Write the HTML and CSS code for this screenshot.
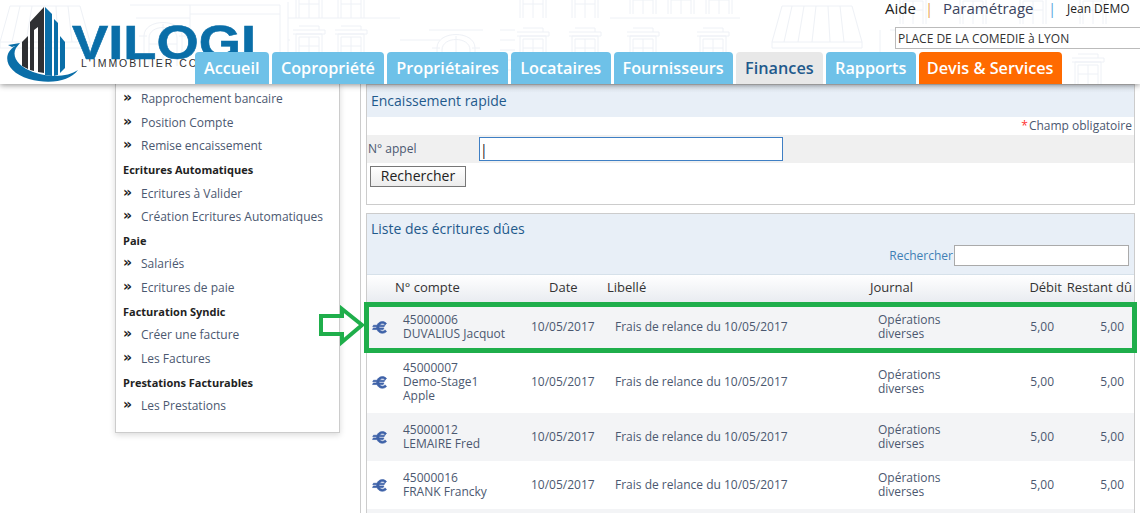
FILE: index.html
```html
<!DOCTYPE html>
<html lang="fr">
<head>
<meta charset="utf-8">
<title>Vilogi - Finances</title>
<link rel="stylesheet" href="styles.css">
</head>
<body>
<header class="header">
  <svg class="header-bg" width="1140" height="84" viewBox="0 0 1140 84" aria-hidden="true">
    <defs>
      <g id="win">
        <path d="M0 34V8H26V34M3 34V11H23V34M13 11V34M3 20H23M-3 8H29M-3 4H29V8M3 0H23V4"/>
      </g>
      <g id="arch">
        <path d="M0 52V22C0 4 38 4 38 22V52M5 52V24C5 10 33 10 33 24V52M19 10V52M5 30H33M-5 22H3M35 22H43M-8 4H46"/>
      </g>
      <g id="awn">
        <path d="M10 0H80L90 36H0ZM20 0L12 36M32 0L26 36M44 0L40 36M56 0L58 36M68 0L72 36M0 36V42H90V36"/>
      </g>
    </defs>
    <g class="bg-lines">
      <use href="#awn" x="0" y="6"/>
      <use href="#arch" x="144" y="14"/>
      <use href="#arch" x="437" y="26"/>
      <use href="#win" x="296" y="26"/>
      <use href="#win" x="338" y="26"/>
      <use href="#win" x="520" y="28"/>
      <use href="#win" x="572" y="28"/>
      <use href="#win" x="630" y="28"/>
      <use href="#win" x="700" y="28"/>
      <use href="#awn" x="772" y="6"/>
      <use href="#win" x="296" y="-16"/>
      <use href="#win" x="338" y="-16"/>
      <use href="#win" x="520" y="-16"/>
      <use href="#win" x="572" y="-16"/>
      <use href="#win" x="630" y="-20"/>
      <use href="#win" x="668" y="-20"/>
      <use href="#win" x="706" y="-20"/>
      <use href="#win" x="900" y="-10"/>
      <use href="#win" x="960" y="-10"/>
      <use href="#win" x="1020" y="-10"/>
      <use href="#win" x="1080" y="-10"/>
      <use href="#win" x="1075" y="54"/>
      <path d="M130 5H280M190 14H280M190 5V52M280 5V84M288 2V84M288 18H400M288 40H290M400 40H440M500 30H515M500 40H515M500 50H515M500 60H515M500 70H515M610 18H740M880 30V52M890 30H1140"/>
    </g>
  </svg>
  <svg class="logo" width="270" height="84" viewBox="0 0 270 84" role="img" aria-label="Vilogi">
    <path class="logo-dark" d="M30 22 44 7V73L38 72V27L34 30V71L30 70Z"/>
    <path class="logo-dark" d="M22 42 28 36V69L22 66Z"/>
    <path class="logo-blue" d="M45 7 52 14V76L45 75Z"/>
    <path class="logo-blue" d="M54 19 58 23V75L54 76Z"/>
    <path class="logo-blue" d="M60 36 65 42V68L60 73Z"/>
    <path class="logo-blue" d="M15 46C1 55 6 72 29 79C50 85 70 81 78 70C68 77 50 78 33 72C19 67 11 57 16 48L20 43 8 45 12 47Z"/>
    <text class="logo-name" x="72" y="59" textLength="184" lengthAdjust="spacingAndGlyphs">VILOGI</text>
    <text class="logo-tag" x="81" y="67" textLength="116" lengthAdjust="spacing">L'IMMOBILIER CO</text>
  </svg>
  <div class="account">
    <a class="account-link account-help">Aide</a>
    <span class="sep">|</span>
    <a class="account-link account-settings">Paramétrage</a>
    <span class="sep sep-blue">|</span>
    <span class="account-user">Jean DEMO</span>
  </div>
  <div class="residence"><input class="residence-input" type="text" value="PLACE DE LA COMEDIE à LYON"></div>
  <nav class="tabs">
    <a class="tab">Accueil</a>
    <a class="tab">Copropriété</a>
    <a class="tab">Propriétaires</a>
    <a class="tab">Locataires</a>
    <a class="tab">Fournisseurs</a>
    <a class="tab tab-active">Finances</a>
    <a class="tab">Rapports</a>
    <a class="tab tab-orange">Devis &amp; Services</a>
  </nav>
</header>

<div class="layout">
  <aside class="sidebar">
    <ul class="menu">
      <li class="menu-item">Rapprochement bancaire</li>
      <li class="menu-item">Position Compte</li>
      <li class="menu-item">Remise encaissement</li>
      <li class="menu-title">Ecritures Automatiques</li>
      <li class="menu-item">Ecritures à Valider</li>
      <li class="menu-item">Création Ecritures Automatiques</li>
      <li class="menu-title">Paie</li>
      <li class="menu-item">Salariés</li>
      <li class="menu-item">Ecritures de paie</li>
      <li class="menu-title">Facturation Syndic</li>
      <li class="menu-item">Créer une facture</li>
      <li class="menu-item">Les Factures</li>
      <li class="menu-title">Prestations Facturables</li>
      <li class="menu-item">Les Prestations</li>
    </ul>
  </aside>

  <main class="main">
    <section class="panel panel-quick">
      <h2 class="panel-title panel-title-quick">Encaissement rapide</h2>
      <p class="required"><span class="star">*</span>Champ obligatoire</p>
      <div class="form-row">
        <label class="form-label" for="appel">N° appel</label>
        <input class="form-input" id="appel" type="text" value="|">
      </div>
      <button class="button" type="button">Rechercher</button>
    </section>

    <section class="panel panel-list">
      <div class="list-head">
        <h2 class="panel-title">Liste des écritures dûes</h2>
        <div class="list-search"><span>Rechercher</span><input class="list-search-input" type="text"></div>
      </div>
      <table class="table">
        <colgroup>
          <col class="c-icon"><col class="c-account"><col class="c-date"><col class="c-label"><col class="c-journal"><col class="c-debit"><col class="c-rest">
        </colgroup>
        <thead>
          <tr>
            <th></th><th>N° compte</th><th class="th-date">Date</th><th>Libellé</th><th>Journal</th><th class="num">Débit</th><th class="num th-rest">Restant dû</th>
          </tr>
        </thead>
        <tbody>
          <tr class="row row-alt row-48">
            <td class="icon-cell"><svg class="euro" width="16" height="13" viewBox="0 0 16 14"><path d="M15 2.6C12 -.6 6.5 .2 4.8 4.6H1L.2 6.2H4.3V7.6H.8L0 9.2H4.7C6.4 13.6 12 14.4 15 11.4L13.6 9.6C11.6 11.6 8.8 11.4 7.6 9.2H11.4L12.2 7.600H7V6.2H12.4L13.2 4.6H7.6C9 2.4 11.6 2.2 13.6 4.2Z"/></svg></td>
            <td>45000006<br>DUVALIUS Jacquot</td><td>10/05/2017</td><td>Frais de relance du 10/05/2017</td><td>Opérations<br>diverses</td><td class="num">5,00</td><td class="num td-rest">5,00</td>
          </tr>
          <tr class="row row-62">
            <td class="icon-cell"><svg class="euro" width="16" height="13" viewBox="0 0 16 14"><path d="M15 2.6C12 -.6 6.5 .2 4.8 4.6H1L.2 6.2H4.3V7.6H.8L0 9.2H4.7C6.4 13.6 12 14.4 15 11.4L13.6 9.6C11.6 11.6 8.8 11.4 7.6 9.2H11.4L12.2 7.600H7V6.2H12.4L13.2 4.6H7.6C9 2.4 11.6 2.2 13.6 4.2Z"/></svg></td>
            <td>45000007<br>Demo-Stage1<br>Apple</td><td>10/05/2017</td><td>Frais de relance du 10/05/2017</td><td>Opérations<br>diverses</td><td class="num">5,00</td><td class="num td-rest">5,00</td>
          </tr>
          <tr class="row row-alt row-48">
            <td class="icon-cell"><svg class="euro" width="16" height="13" viewBox="0 0 16 14"><path d="M15 2.6C12 -.6 6.5 .2 4.8 4.6H1L.2 6.2H4.3V7.6H.8L0 9.2H4.7C6.4 13.6 12 14.4 15 11.4L13.6 9.6C11.6 11.6 8.8 11.4 7.6 9.2H11.4L12.2 7.600H7V6.2H12.4L13.2 4.6H7.6C9 2.4 11.6 2.2 13.6 4.2Z"/></svg></td>
            <td>45000012<br>LEMAIRE Fred</td><td>10/05/2017</td><td>Frais de relance du 10/05/2017</td><td>Opérations<br>diverses</td><td class="num">5,00</td><td class="num td-rest">5,00</td>
          </tr>
          <tr class="row row-48">
            <td class="icon-cell"><svg class="euro" width="16" height="13" viewBox="0 0 16 14"><path d="M15 2.6C12 -.6 6.5 .2 4.8 4.6H1L.2 6.2H4.3V7.6H.8L0 9.2H4.7C6.4 13.6 12 14.4 15 11.4L13.6 9.6C11.6 11.6 8.8 11.4 7.6 9.2H11.4L12.2 7.600H7V6.2H12.4L13.2 4.6H7.6C9 2.4 11.6 2.2 13.6 4.2Z"/></svg></td>
            <td>45000016<br>FRANK Francky</td><td>10/05/2017</td><td>Frais de relance du 10/05/2017</td><td>Opérations<br>diverses</td><td class="num">5,00</td><td class="num td-rest">5,00</td>
          </tr>
          <tr class="row row-alt row-48"><td colspan="7"></td></tr>
        </tbody>
      </table>
      <div class="highlight"></div>
      <svg class="callout" width="48" height="42" viewBox="0 0 48 42" aria-hidden="true">
        <path d="M3 11H24V4L44 20 24 37V29H3Z"/>
      </svg>
    </section>
  </main>
</div>
</body>
</html>
```

FILE: styles.css
```css
* { box-sizing: border-box; }
html, body { height: 513px; overflow: hidden; }
body {
  margin: 0;
  background: #fff;
  font-family: "Open Sans", "Liberation Sans", sans-serif;
  font-size: 12px;
  color: #4b5870;
}

/* Header */
.header {
  position: relative;
  z-index: 2;
  height: 84px;
  background: #fff;
  box-shadow: 0 1px 6px rgba(0, 0, 0, .45);
}
.header-bg { position: absolute; left: 0; top: 0; }
.bg-lines { fill: none; stroke: #eef1f6; stroke-width: 1; }
.logo { position: absolute; left: 0; top: 0; }
.logo-dark { fill: #2f3033; }
.logo-blue { fill: #0a6ea8; }
.logo-name {
  font-family: "Liberation Sans", sans-serif;
  font-weight: 700;
  font-size: 49px;
  fill: #0a6ea8;
  stroke: #0a6ea8;
  stroke-width: .6px;
}
.logo-tag {
  font-family: "Liberation Sans", sans-serif;
  font-size: 10.500px;
  fill: #2f3033;
}
.account {
  position: absolute;
  left: 885px;
  top: -4px;
  width: 255px;
  height: 24px;
  display: flex;
  align-items: center;
  font-size: 15px;
  white-space: nowrap;
}
.account-link { color: #333; }
.account-help { width: 40px; color: #222; }
.account-settings { width: 105px; color: #3c4560; }
.sep { width: 18px; color: #e9a35a; font-size: 15px; }
.sep-blue { width: 19px; color: #5ba6de; }
.account-user { font-size: 12px; color: #222; }
.residence { position: absolute; left: 895px; top: 27px; width: 245px; }
.residence-input {
  display: block;
  width: 260px;
  height: 22px;
  padding: 0 2px;
  border: 1px solid #bbb;
  background: #fff;
  font: 12px "Open Sans", sans-serif;
  color: #333;
  outline: 0;
}
.tabs {
  position: absolute;
  left: 195px;
  top: 52px;
  display: flex;
  gap: 3px;
}
.tab {
  height: 32px;
  padding: 0 9.460px 0 8.900px;
  display: flex;
  align-items: center;
  border-radius: 4px 4px 0 0;
  background: #6ec1e8;
  color: #fff;
  font-size: 16.250px;
  font-weight: 600;
  white-space: nowrap;
}
.tab-active { background: #e8e8e8; color: #1f5a8c; }
.tab-orange { background: #ff6a00; padding: 0 8.500px 0 8px; }

/* Layout */
.layout {
  display: flex;
  align-items: flex-start;
  height: 429px;
  padding-left: 115px;
  overflow: hidden;
}
.sidebar {
  flex: none;
  width: 225px;
  height: 349px;
  border: 1px solid #ccc;
  border-top: 0;
  background: #fff;
  box-shadow: 0 2px 6px rgba(0, 0, 0, .15);
}
.menu { list-style: none; margin: 0; padding: 3.200px 0 0 7px; }
.menu-item, .menu-title {
  height: 23.620px;
  line-height: 23.620px;
  white-space: nowrap;
}
.menu-item { padding-left: 18px; position: relative; color: #4b5870; }
.menu-item::before {
  content: "»";
  position: absolute;
  left: 0;
  top: -1px;
  color: #222;
  font-family: "DejaVu Sans", sans-serif;
  font-weight: 700;
  font-size: 14px;
}
.menu-title { font-size: 11px; font-weight: 700; color: #222; }
.main {
  flex: none;
  width: 780px;
  height: 429px;
  margin-left: 20px;
  padding: 0 5px 0 5px;
  border-left: 1px solid #ccc;
}
.panel {
  border: 1px solid #ccc;
  background: #fff;
}
.panel-quick { height: 121px; }
.panel-title {
  margin: 0;
  color: #1f5a8c;
  font-size: 14px;
  font-weight: 400;
}
.panel-title-quick {
  height: 32px;
  padding: 6px 0 0 4px;
  background: linear-gradient(#dfe6ee, #e8eff7 8px);
}
.required {
  margin: 0;
  height: 18px;
  padding-right: 2px;
  line-height: 18px;
  text-align: right;
}
.star { margin-right: 1px; color: #f33; }
.form-row {
  display: flex;
  align-items: center;
  height: 28px;
  background: #f0f0f0;
}
.form-label { width: 112px; padding: 0 0 2px 1px; }
.form-input {
  width: 304px;
  height: 24px;
  border: 1px solid #3f7fc4;
  padding: 0;
  background: #fff;
  font: 14px "Open Sans", sans-serif;
  color: #222;
  outline: 0;
}
.button {
  display: block;
  width: 96px;
  height: 21px;
  margin: 3px 0 0 3px;
  padding: 0 0 3px;
  border: 1px solid #777;
  background: linear-gradient(#fff, #ececec);
  font: 14px/15px "Open Sans", sans-serif;
  color: #222;
}
.panel-list {
  position: relative;
  margin-top: 8px;
  height: 330px;
  overflow: visible;
  border-bottom: 0;
}
.list-head {
  height: 61px;
  padding: 5px 4px 0 4px;
  background: #e8eff7;
  border-bottom: 1px solid #d6e1ea;
  position: relative;
}
.list-search {
  position: absolute;
  right: 5px;
  top: 31px;
  display: flex;
  align-items: center;
  color: #3f7fb5;
}
.list-search-input {
  width: 175px;
  height: 21px;
  margin-left: 1px;
  border: 1px solid #aaa;
  background: #fff;
}
.table {
  width: 767px;
  table-layout: fixed;
  border-collapse: collapse;
}
.c-icon { width: 28px; }
.c-account { width: 128px; }
.c-date { width: 84px; }
.c-label { width: 263px; }
.c-journal { width: 130px; }
.c-debit { width: 62px; }
.c-rest { width: 72px; }
.table th {
  height: 28px;
  padding: 0 0 4px;
  background: linear-gradient(#fff, #e8ebf0);
  color: #333;
  font-size: 13px;
  font-weight: 400;
  text-align: left;
  white-space: nowrap;
}
.table th.th-date { padding-left: 26px; }
.table th.num { text-align: right; }
.table th.th-rest { padding-right: 2px; }
.table td {
  padding: 0 0 0 8px;
  line-height: 14px;
  vertical-align: middle;
  color: #4b5870;
}
.table td.num { text-align: right; padding: 0 8px 0 0; }
.table td.td-rest { padding-right: 10px; }
.table td.icon-cell { padding: 1px 0 0 5px; }
.row-48 { height: 48px; }
.row-62 { height: 62px; }
.row-alt { background: #f3f4f6; }
.euro { display: block; fill: #3e62a8; stroke: #3e62a8; stroke-width: .7px; }
.highlight {
  position: absolute;
  left: -3px;
  top: 88px;
  width: 773px;
  height: 51px;
  border: 5px solid #1fae4b;
}
.callout {
  position: absolute;
  left: -49px;
  top: 91px;
  fill: none;
  stroke: #1fae4b;
  stroke-width: 4;
}
```
